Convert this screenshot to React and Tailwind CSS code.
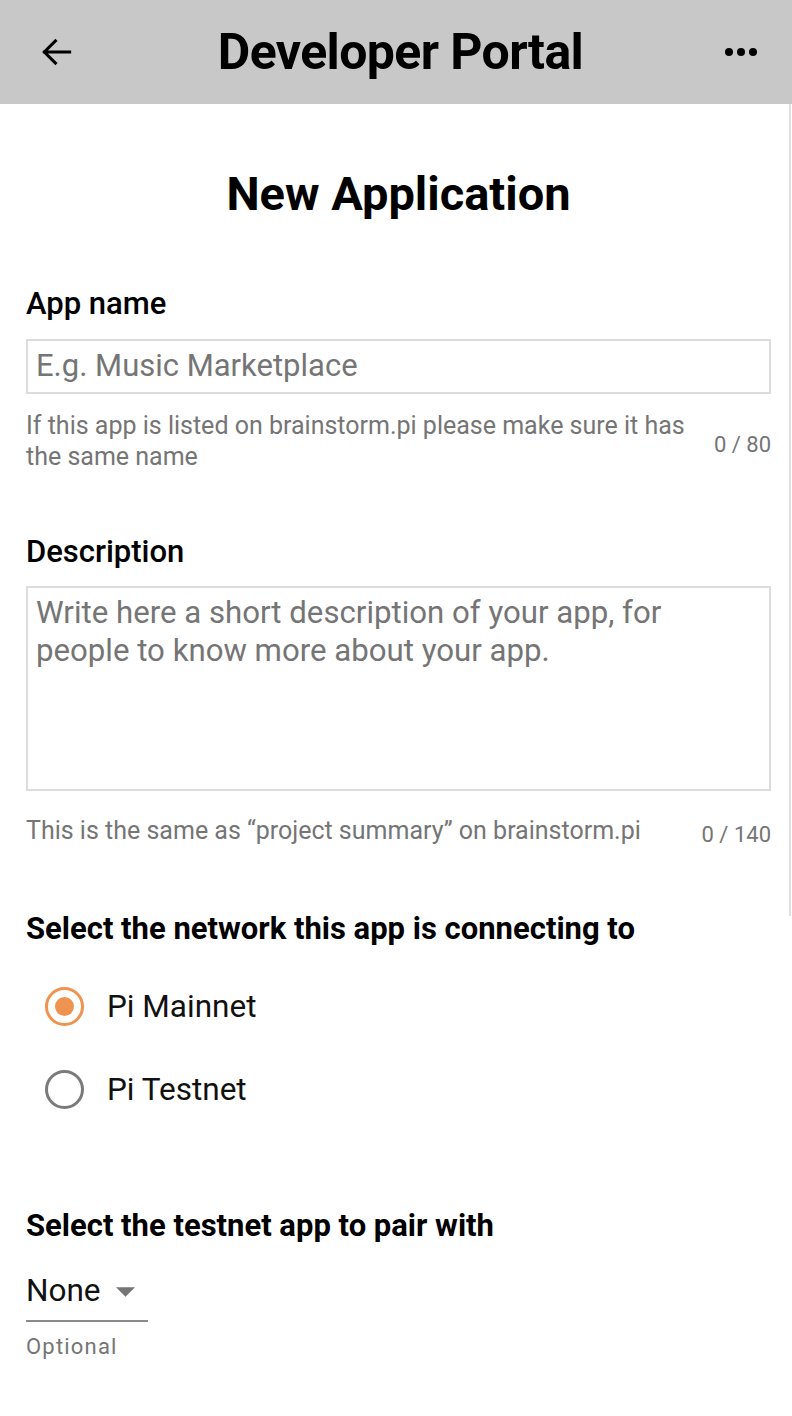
import React from "react";

export default function App() {
  return (
    <div className="relative w-[792px] min-h-[1416px] bg-white" style={{ fontFamily: "Roboto, 'Liberation Sans', sans-serif" }}>
      <header className="h-[104px] bg-[#c8c8c8] flex items-center justify-between pl-[38px] pr-[35px]">
        <svg width="38" height="38" viewBox="0 0 24 24" fill="none" stroke="#000" strokeWidth="1.9" strokeLinecap="square">
          <path d="M20 12H4M11 5l-7 7 7 7" />
        </svg>
        <h1 className="text-[50px] font-bold text-black leading-[60px] tracking-[-0.6px]">Developer Portal</h1>
        <div className="flex gap-[4px] w-[32px] justify-center">
          <span className="w-[8px] h-[8px] rounded-full bg-black" />
          <span className="w-[8px] h-[8px] rounded-full bg-black" />
          <span className="w-[8px] h-[8px] rounded-full bg-black" />
        </div>
      </header>
      <div className="absolute right-[1px] top-[104px] w-[2px] h-[812px] bg-[#e0e0e0]" />

      <main className="pl-[26px] pr-[21px]">
        <h2 className="text-center text-[47px] font-bold text-black mt-[62px] leading-[56px]">New Application</h2>

        <label className="block mt-[64px] text-[31px] font-medium text-black leading-[36px]">App name</label>
        <div className="mt-[17px] h-[55px] border-2 border-[#dcdcdc] flex items-center px-[8px]">
          <span className="text-[31px] text-[#757575]">E.g. Music Marketplace</span>
        </div>
        <div className="mt-[16px] flex justify-between items-start text-[#757575]">
          <p className="w-[675px] text-[25px] leading-[31px]">If this app is listed on brainstorm.pi please make sure it has the same name</p>
          <span className="mt-[19px] text-[22px] leading-[31px]">0 / 80</span>
        </div>

        <label className="block mt-[62px] text-[31px] font-medium text-black leading-[36px]">Description</label>
        <div className="mt-[16px] h-[205px] border-2 border-[#dcdcdc] px-[8px] pt-[6px]">
          <p className="text-[31.2px] text-[#757575] leading-[38px]">Write here a short description of your app, for<br />people to know more about your app.</p>
        </div>
        <div className="mt-[24px] flex justify-between items-start text-[#757575]">
          <p className="text-[25px] leading-[31px]">This is the same as “project summary” on brainstorm.pi</p>
          <span className="mt-[4px] text-[22px] leading-[31px]">0 / 140</span>
        </div>

        <h3 className="mt-[61px] text-[31px] font-bold text-black leading-[36px]">Select the network this app is connecting to</h3>
        <div className="mt-[18px] flex flex-col">
          <div className="flex items-center h-[83px]">
            <span className="ml-[19px] w-[39px] h-[39px] rounded-full border-[3px] border-[#ef9450] flex items-center justify-center">
              <span className="w-[19px] h-[19px] rounded-full bg-[#ef9450]" />
            </span>
            <span className="ml-[23px] text-[31.5px] text-[#111]">Pi Mainnet</span>
          </div>
          <div className="flex items-center h-[83px]">
            <span className="ml-[19px] w-[39px] h-[39px] rounded-full border-[3px] border-[#7a7a7a]" />
            <span className="ml-[23px] text-[31.5px] text-[#111]">Pi Testnet</span>
          </div>
        </div>

        <h3 className="mt-[77px] text-[31px] font-bold text-black leading-[36px]">Select the testnet app to pair with</h3>
        <div className="mt-[29px] w-[122px] border-b-2 border-[#8a8a8a] flex items-center pb-[11px]">
          <span className="text-[31.5px] text-[#111] leading-[36px]">None</span>
          <svg className="ml-[15px] mt-[2px]" width="19" height="10" viewBox="0 0 20 10"><path d="M0 0h20L10 10z" fill="#757575" /></svg>
        </div>
        <p className="mt-[12px] text-[22px] leading-[26px] text-[#757575] tracking-[1.2px]">Optional</p>
      </main>
    </div>
  );
}
